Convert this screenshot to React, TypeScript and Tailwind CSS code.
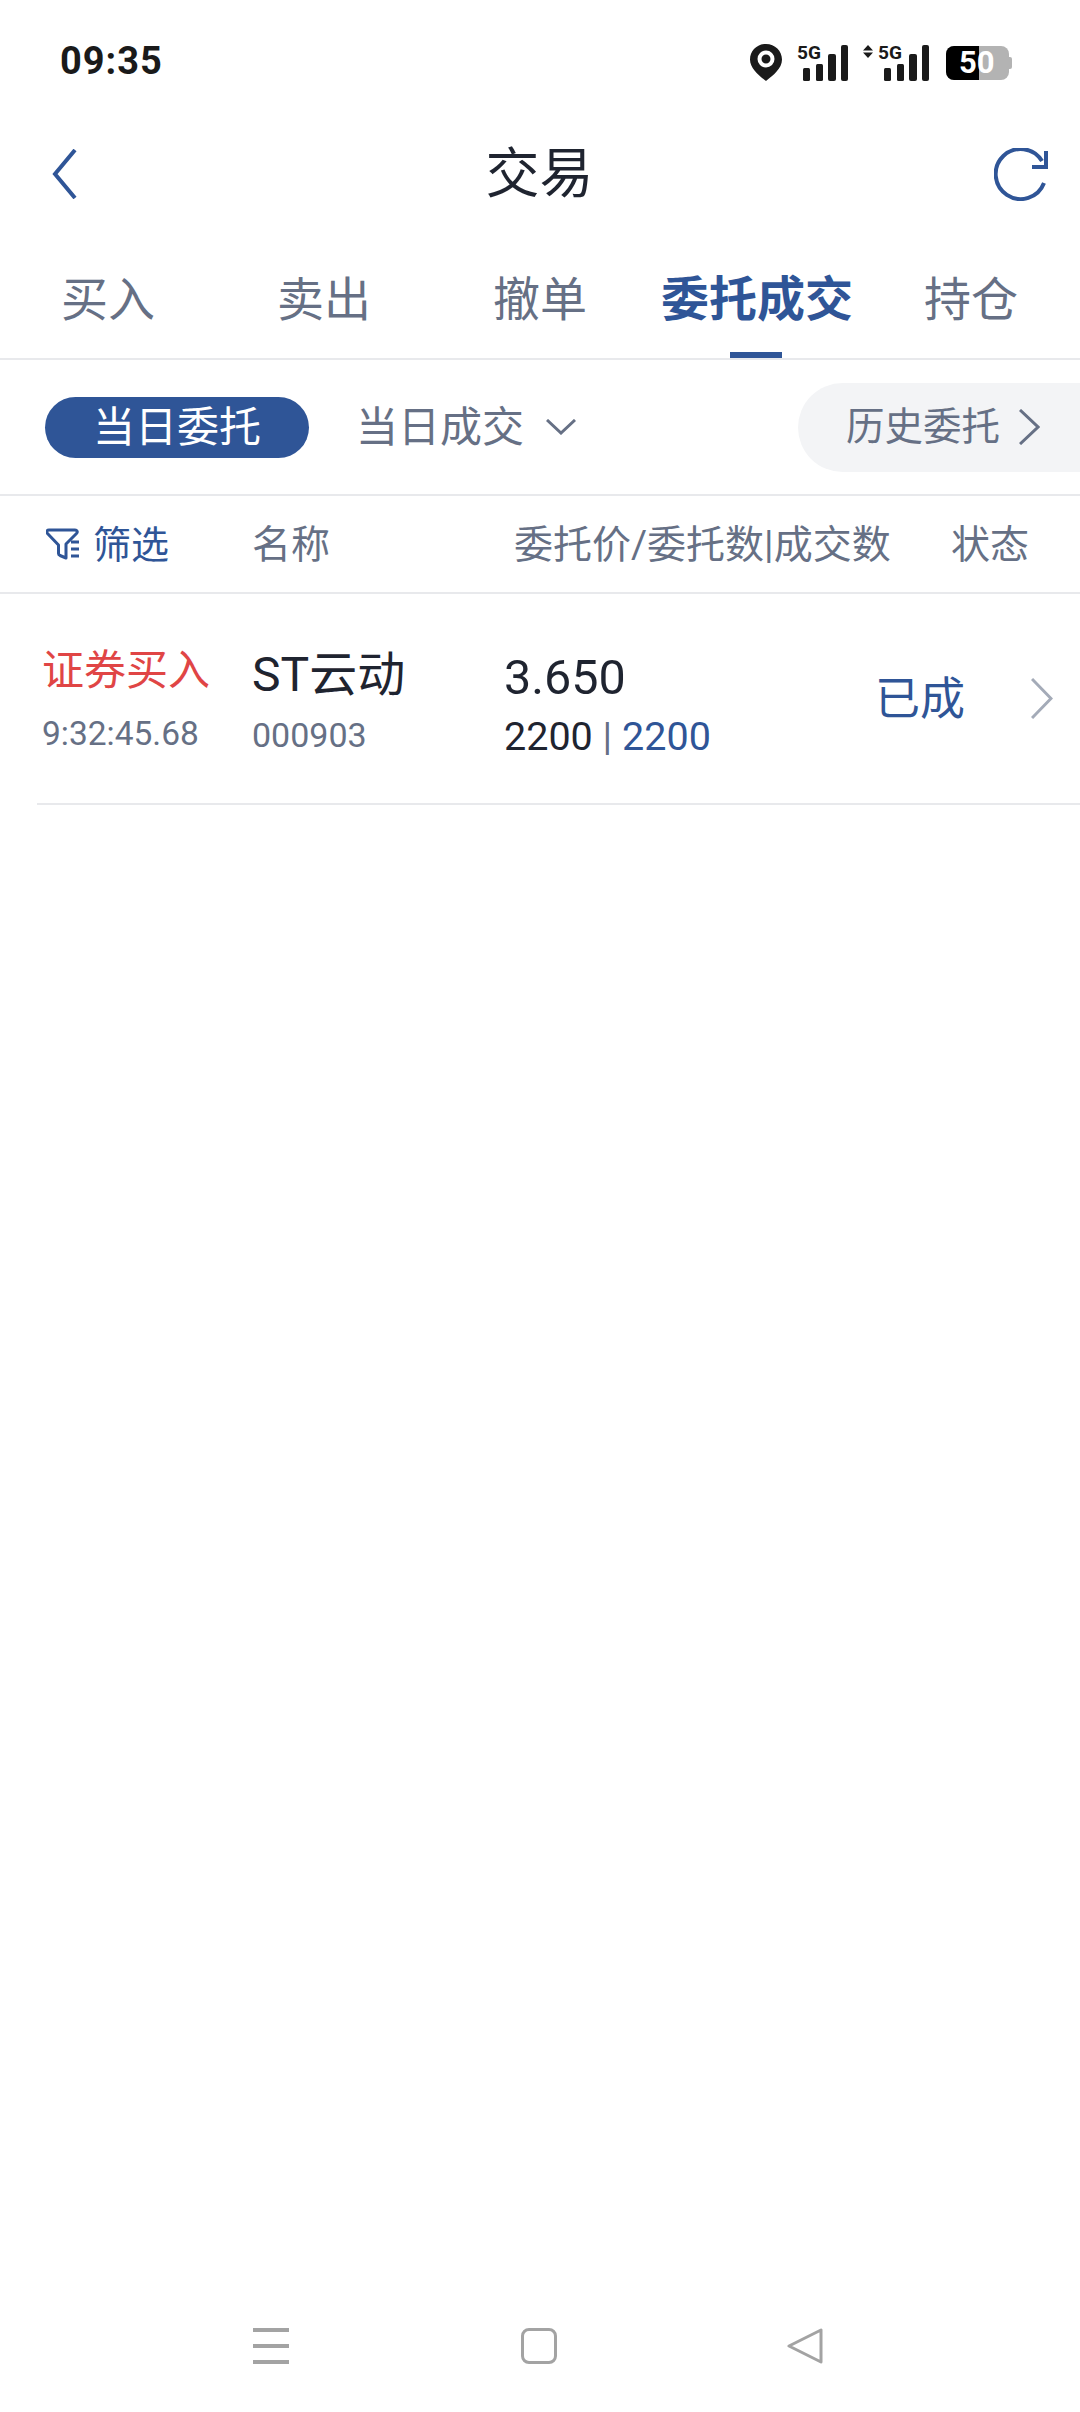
const CJK = "font-['Roboto','Noto_Sans_CJK_SC',sans-serif]"

// Signal bars with the small 5G label on top
function Signal({ arrows }: { arrows?: boolean }) {
  const x = arrows ? 15 : 0
  return (
    <svg className="overflow-visible" width={arrows ? 66 : 51} height="36" viewBox={arrows ? "0 0 66 36" : "0 0 51 36"} fill="#1a1a1a">
      <g transform={`translate(${x} 0)`}>
        <text x="0" y="14" fontSize="19" fontWeight="700" fontFamily="Roboto, sans-serif" textLength="24" lengthAdjust="spacingAndGlyphs">5G</text>
        <rect x="6" y="23" width="7" height="13" rx="1.5" />
        <rect x="19" y="19" width="7" height="17" rx="1.5" />
        <rect x="31" y="9" width="8" height="27" rx="2" />
        <rect x="44" y="0" width="7" height="36" rx="2" />
      </g>
      {arrows && <path d="M5 0l5 5.500H0zM5 13l5-5.500H0z" />}
    </svg>
  )
}

function Chevron({ w, h, color, stroke }: { w: number; h: number; color: string; stroke: number }) {
  return (
    <svg width={w} height={h} viewBox={`0 0 ${w} ${h}`} fill="none" stroke={color} strokeWidth={stroke}>
      <path d={`M1 1L${w - 2} ${h / 2}L1 ${h - 1}`} />
    </svg>
  )
}

export default function App() {
  return (
    <div className={`w-[1080px] h-[2412px] bg-white flex flex-col ${CJK}`}>
      {/* status bar */}
      <div className="h-[120px] pl-[60px] pr-[71px] pt-[2px] flex items-center justify-between">
        <span className="text-[38px] font-bold text-[#1a1a1a] tracking-[1px]">09:35</span>
        <div className="flex items-center gap-[15px] mt-[3px]">
          <svg width="32" height="37" viewBox="0 0 32 37">
            <path fill="#1a1a1a" d="M16 0c9 0 16 7 16 15.500 0 9-9 16-16 21.500C9 31.500 0 24.500 0 15.500 0 7 7 0 16 0z" />
            <circle cx="16" cy="15" r="6.500" fill="none" stroke="#fff" strokeWidth="4" />
          </svg>
          <Signal />
          <Signal arrows />
          <div className="relative ml-[2px] flex h-[34px] w-[63px] items-center rounded-[8px] bg-[#b3b3b3]">
            <div className="absolute left-0 top-0 h-full w-[33px] rounded-l-[8px] bg-black" />
            <span className="relative pl-[13px] text-[31px] leading-none font-bold text-white">50</span>
            <div className="absolute right-[-3px] top-[11px] h-[12px] w-[3px] rounded-r-[2px] bg-[#b3b3b3]" />
          </div>
        </div>
      </div>

      {/* title bar */}
      <div className="h-[108px] flex items-center justify-between pl-[52px] pr-[32px]">
        <svg width="25" height="50" viewBox="0 0 25 50" fill="none" stroke="#2f5597" strokeWidth="4">
          <path d="M23 1L3 25L23 49" />
        </svg>
        <h1 className="ml-[8px] text-[54px] text-[#1f2430] font-normal">交易</h1>
        <svg width="54" height="53" viewBox="0 0 54 53" fill="none" stroke="#2f5597" strokeWidth="4">
          <path d="M50 35A25 25 0 1 1 48 13" />
          <path d="M52 3v16H38" />
        </svg>
      </div>

      {/* tabs */}
      <div className="h-[132px] flex items-stretch border-b-2 border-[#e8e9ec] text-[47px] text-[#667085]">
        <span className="ml-[61px] self-center pt-[14px]">买入</span>
        <span className="ml-[122px] self-center pt-[14px]">卖出</span>
        <span className="ml-[122px] self-center pt-[14px]">撤单</span>
        <div className="relative ml-[74px] flex items-center pt-[14px]">
          <span className="text-[48px] font-bold text-[#2f5597]">委托成交</span>
          <div className="absolute left-[69px] bottom-0 h-[6px] w-[52px] bg-[#2f5597]" />
        </div>
        <span className="ml-[71px] self-center pt-[14px]">持仓</span>
      </div>

      {/* sub filters */}
      <div className="h-[136px] flex items-center border-b-2 border-[#e8e9ec] text-[42px]">
        <div className="ml-[45px] w-[264px] h-[61px] rounded-[31px] bg-[#2f5597] text-white flex items-center justify-center">当日委托</div>
        <span className="ml-[47px] text-[#667085]">当日成交</span>
        <svg className="ml-[22px]" width="30" height="16" viewBox="0 0 30 16" fill="none" stroke="#667085" strokeWidth="3">
          <path d="M1 1L15 14L29 1" />
        </svg>
        <div className="ml-auto w-[282px] h-[89px] rounded-l-[45px] bg-[#f3f4f6] flex items-center pl-[48px] text-[38.5px] text-[#667085]">
          <span>历史委托</span>
          <div className="ml-[19px]">
            <Chevron w={21} h={36} color="#667085" stroke={3} />
          </div>
        </div>
      </div>

      {/* column header */}
      <div className="h-[98px] pt-[3px] flex items-center border-b-2 border-[#e8e9ec] text-[39px] text-[#667085]">
        <svg className="ml-[46px] -mt-[3px]" width="33" height="32" viewBox="0 0 33 32" fill="none" stroke="#2f5597" strokeWidth="3">
          <path d="M3 2h26c2 0 3 2 1.500 3.500L20 16v14l-6-2.500c-1-.5-1.500-1-1.500-2V17L1.500 5.500C0 4 1 2 3 2z" strokeLinejoin="round" />
          <path d="M25 14h8M25 21h8M25 28h8" />
        </svg>
        <span className="ml-[14px] text-[38px] text-[#2f5597]">筛选</span>
        <span className="ml-[83px]">名称</span>
        <span className="ml-[184px]">委托价/委托数|成交数</span>
        <span className="ml-auto pr-[51px]">状态</span>
      </div>

      {/* order row */}
      <div className="ml-[37px] pl-[5px] h-[211px] flex items-center border-b-2 border-[#e8e9ec]">
        <div className="w-[210px] pt-[3px] flex flex-col gap-[19px]">
          <span className="text-[42px] leading-[48px] text-[#e04545]">证券买入</span>
          <span className="text-[33.500px] leading-[40px] text-[#667085]">9:32:45.68</span>
        </div>
        <div className="w-[252px] pt-[3px] flex flex-col gap-[11px]">
          <span className="text-[48px] leading-[58px] text-[#1f2430]">ST云动</span>
          <span className="text-[34px] leading-[40px] text-[#667085]">000903</span>
        </div>
        <div className="w-[371px] pt-[12px] flex flex-col gap-[4px]">
          <span className="text-[48.500px] leading-[60px] text-[#1f2430]">3.650</span>
          <span className="text-[39.500px] leading-[50px] text-[#1f2430]">
            2200 <span className="text-[#667085]">|</span> <span className="text-[#2f5597]">2200</span>
          </span>
        </div>
        <span className="pt-[3px] text-[45px] text-[#2f5597]">已成</span>
        <div className="ml-[66px]">
          <Chevron w={22} h={41} color="#a4abb8" stroke={3} />
        </div>
      </div>

      <div className="flex-1" />

      {/* system nav bar */}
      <div className="h-[112px] pt-[28px] pl-[253px] flex items-start">
        <div className="flex w-[36px] h-[36px] flex-col justify-between">
          <div className="h-[4px] bg-[#a3a3a3]" />
          <div className="h-[4px] bg-[#a3a3a3]" />
          <div className="h-[4px] bg-[#a3a3a3]" />
        </div>
        <div className="ml-[232px] w-[36px] h-[36px] rounded-[8px] border-[3px] border-[#a3a3a3]" />
        <svg className="ml-[230px]" width="36" height="36" viewBox="0 0 36 36" fill="none" stroke="#a3a3a3" strokeWidth="3" strokeLinejoin="round">
          <path d="M34 2v32L2 18z" />
        </svg>
      </div>
    </div>
  )
}
